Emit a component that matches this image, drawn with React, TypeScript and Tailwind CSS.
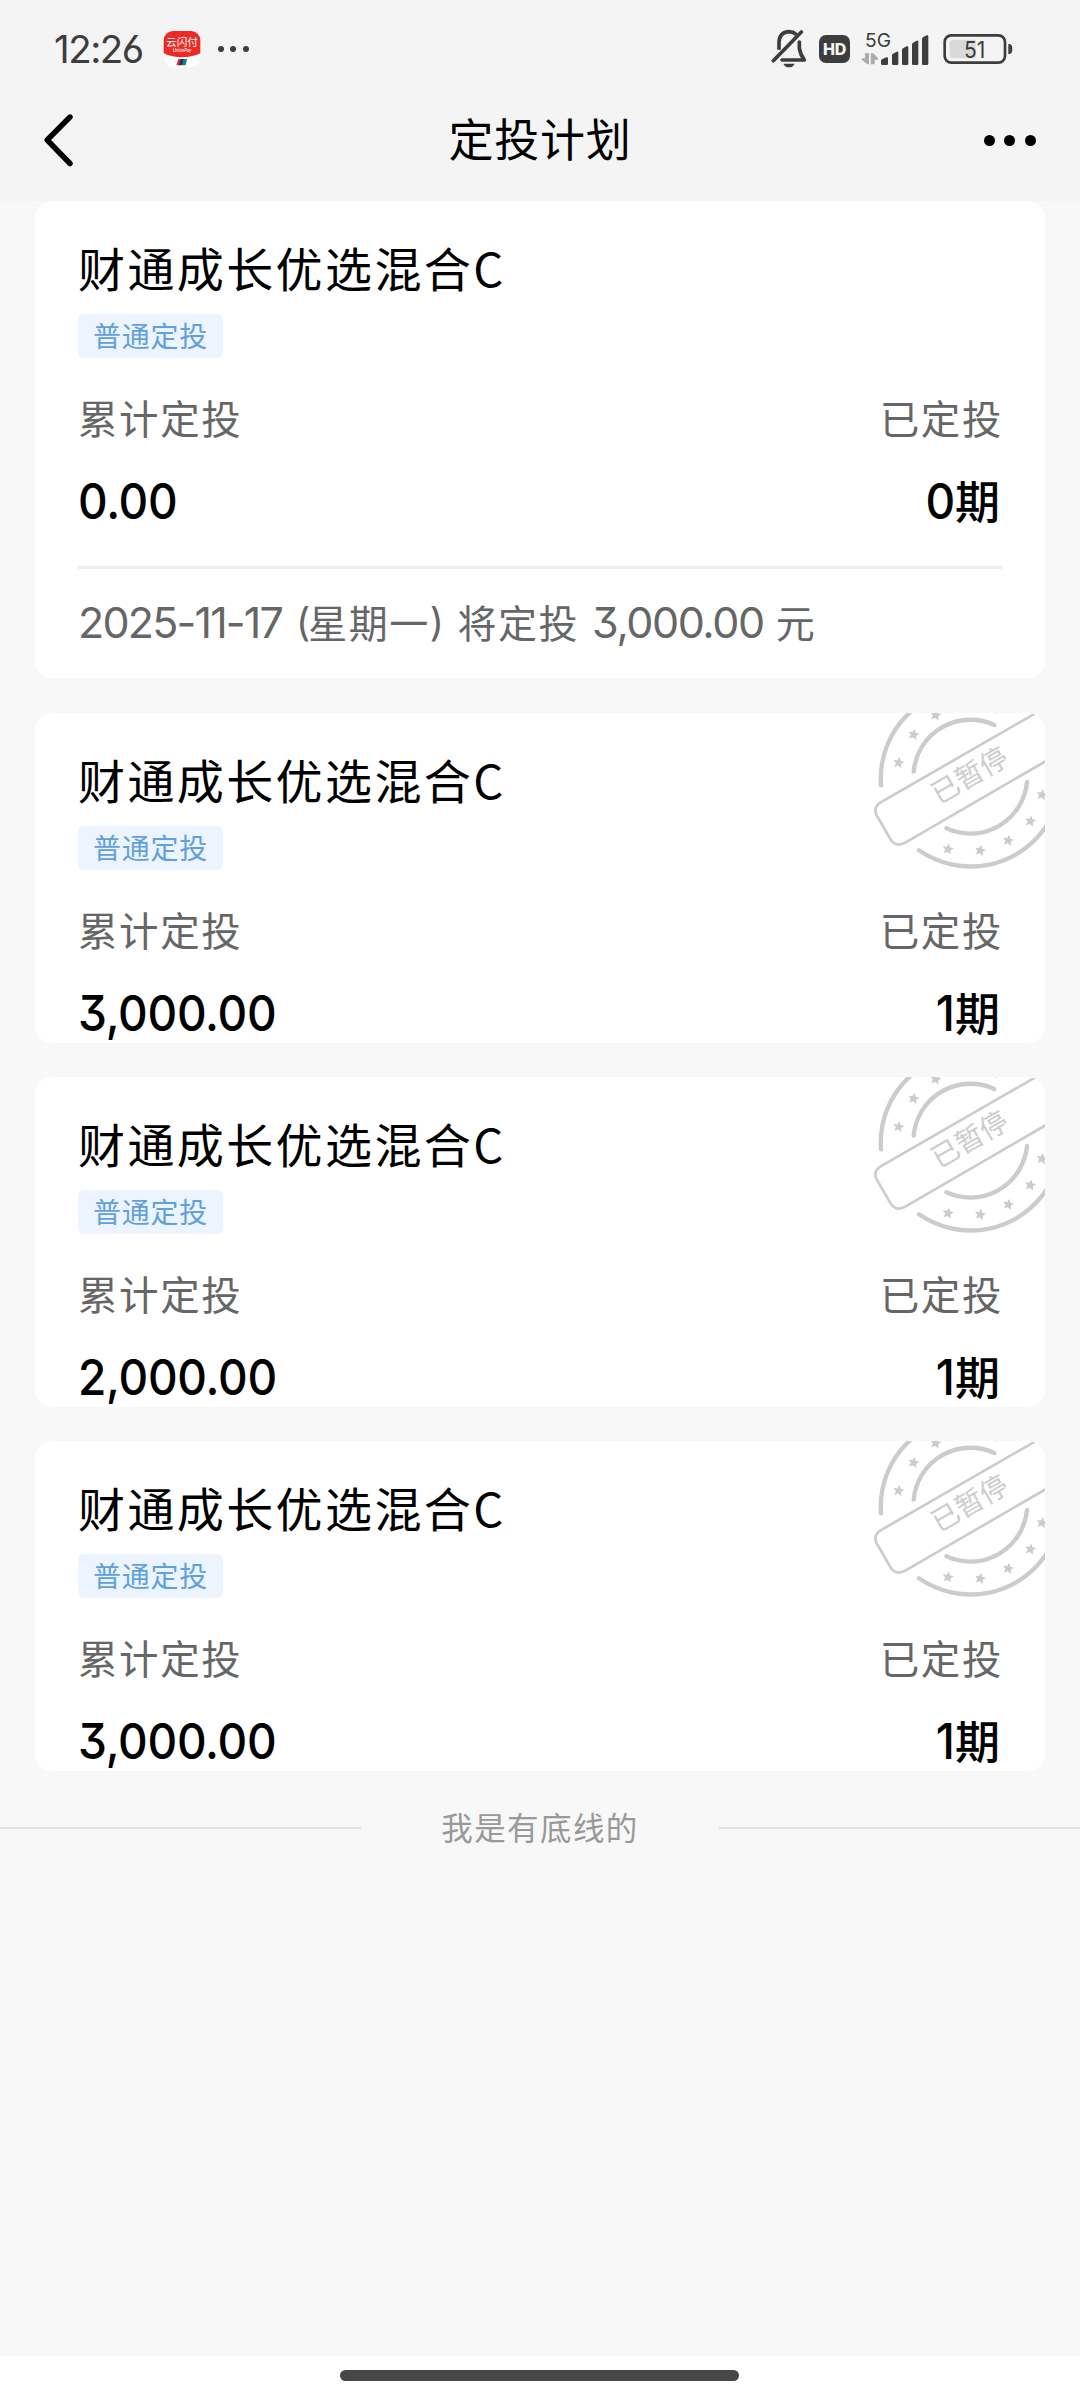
import type { ReactNode } from 'react';

const CJK = "font-['Noto_Sans_CJK_SC',sans-serif]";

/** Latin digits use Inter with the flat-topped three and straight-stemmed six. */
function Num({ children, className = '' }: { children: ReactNode; className?: string }) {
  return (
    <span className={`font-['Inter',sans-serif] [font-feature-settings:'cv09','cv03'] ${className}`}>
      {children}
    </span>
  );
}

function UnionPayIcon() {
  return (
    <svg className="ml-[20px] h-9 w-9.5" viewBox="0 0 114 108">
      <defs>
        <clipPath id="app-shape">
          <rect x="2" y="0" width="110" height="108" rx="28" />
        </clipPath>
      </defs>
      <g clipPath="url(#app-shape)">
        <rect width="114" height="108" fill="#fff" />
        <path d="M0 0H114V66Q57 92 0 66Z" fill="#ee2a24" />
        <path d="M46 84H56L50 103H40Z" fill="#d9283b" />
        <path d="M54 84H64L58 103H48Z" fill="#16306b" />
        <path d="M62 84H72L68 103H57Z" fill="#0d7f80" />
        <text x="57" y="45" fontSize="32" textAnchor="middle" fill="#fff" fontFamily="Noto Sans CJK SC, sans-serif">
          云闪付
        </text>
        <text x="57" y="64" fontSize="14" fontStyle="italic" textAnchor="middle" fill="#fff" fontFamily="Lato, sans-serif">
          UnionPay
        </text>
      </g>
    </svg>
  );
}

function BellOff() {
  return (
    <svg className="h-10 w-9" viewBox="94 90 108 120" fill="none" stroke="#3d3d3d" strokeLinecap="round" strokeLinejoin="round">
      <path d="M171 107Q160 98 148 98Q119 99 118 131V152" strokeWidth="11" strokeLinecap="butt" />
      <path d="M179 129V147Q181 165 194 183H127" strokeWidth="11" />
      <path d="M185 99L101 185" strokeWidth="11" />
      <path d="M131 194H165Q160 205 148 205Q136 205 131 194Z" fill="#3d3d3d" stroke="none" />
    </svg>
  );
}

function HdBadge() {
  return (
    <div className="ml-3 flex h-7 w-[31px] items-center justify-center rounded-[7px] bg-[#3d3d3d] font-['Inter',sans-serif] text-[16px] leading-none font-extrabold tracking-[-0.3px] text-[#f4f4f4]">
      HD
    </div>
  );
}

function Signal() {
  return (
    <svg className="ml-[11px] h-9 w-[68px] overflow-visible" viewBox="364 92 204 108">
      <text x="376" y="139" fontSize="57" fill="#3d3d3d" textLength="78" lengthAdjust="spacingAndGlyphs" fontFamily="Inter, sans-serif">
        5G
      </text>
      <g fill="#ababab">
        <path d="M376 159H390V192H383L366 178V174H376Z" />
        <path d="M393 159H401L415 174V178H405V192H393Z" />
      </g>
      <path d="M390 159V192" stroke="#f4f4f4" strokeWidth="4" />
      <g fill="#3d3d3d">
        <path d="M424 182Q424 179 427 177L440 171Q445 169 445 174V190Q445 194 441 194H428Q424 194 424 190Z" />
        <path d="M457 165Q457 162 460 160L471 154Q476 152 476 157V190Q476 194 472 194H461Q457 194 457 190Z" />
        <path d="M487 149Q487 146 490 144L501 138Q506 136 506 141V190Q506 194 502 194H491Q487 194 487 190Z" />
        <path d="M517 132Q517 129 520 127L531 121Q536 119 536 124V190Q536 194 532 194H521Q517 194 517 190Z" />
        <path d="M547 116Q547 113 550 111L561 105Q566 103 566 108V190Q566 194 562 194H551Q547 194 547 190Z" />
      </g>
    </svg>
  );
}

function Battery() {
  return (
    <svg className="ml-[14px] h-[30px] w-[70px]" viewBox="608 102 210 90">
      <rect x="613" y="106" width="181" height="82" rx="20" fill="none" stroke="#3d3d3d" strokeWidth="8" />
      <path d="M640 119H706V175H640Q628 175 628 163V131Q628 119 640 119Z" fill="#d9d9d9" />
      <path d="M804 132H808Q816 134 816 147Q816 160 808 162H804Z" fill="#3d3d3d" />
      <text x="671" y="173" fontSize="69" fill="#3d3d3d" textLength="64" lengthAdjust="spacingAndGlyphs" fontFamily="Inter, sans-serif">
        51
      </text>
    </svg>
  );
}

function StatusBar() {
  return (
    <div className="flex h-[98px] items-center justify-between pr-[67px] pl-[54px]">
      <div className="flex items-center">
        <Num className="text-[38.5px] leading-none tracking-[-1.5px] text-[#3d3d3d]">12:26</Num>
        <UnionPayIcon />
        <div className="ml-[17px] flex gap-[6.5px]">
          <i className="h-1.5 w-1.5 rounded-full bg-[#3d3d3d]" />
          <i className="h-1.5 w-1.5 rounded-full bg-[#3d3d3d]" />
          <i className="h-1.5 w-1.5 rounded-full bg-[#3d3d3d]" />
        </div>
      </div>
      <div className="flex items-center">
        <BellOff />
        <HdBadge />
        <Signal />
        <Battery />
      </div>
    </div>
  );
}

function NavBar() {
  return (
    <div className="flex h-[103px] items-start justify-between pr-[44px] pl-[44px]">
      <svg className="mt-[14px] h-[56px] w-[32px]" viewBox="0 0 32 56" fill="none" stroke="#000" strokeWidth="5.4" strokeLinecap="round" strokeLinejoin="round">
        <path d="M26 5L3.200 28L26 51.500" />
      </svg>
      <h1 className="mt-1.5 ml-5 text-[45px] leading-[68px] tracking-[0.8px] text-black">定投计划</h1>
      <div className="mt-[37px] flex gap-[9.5px]">
        <i className="h-[11px] w-[11px] rounded-full bg-black" />
        <i className="h-[11px] w-[11px] rounded-full bg-black" />
        <i className="h-[11px] w-[11px] rounded-full bg-black" />
      </div>
    </div>
  );
}

const STARS = [
  [176, 218],
  [221, 133],
  [287, 75],
  [463, 56],
  [324, 477],
  [421, 481],
  [505, 451],
  [571, 393],
  [606, 314],
];

function PausedStamp() {
  return (
    <svg className="absolute top-0 right-0 h-[177px] w-[205px]" viewBox="0 69 615 531" fill="none" stroke="#cccccc" strokeLinecap="round">
      <path d="M123 286A271 271 0 0 1 212 65" strokeWidth="13" />
      <path d="M237 481A272 272 0 0 0 625 398" strokeWidth="13" />
      <path d="M221 245A171 171 0 0 1 463 105" strokeWidth="13" />
      <path d="M319 415A171 171 0 0 0 561 276" strokeWidth="13" />
      <path d="M600 62L122 337Q98 352 110 376L150 445Q165 472 192 460L625 209" strokeWidth="8" />
      {STARS.map(([x, y]) => (
        <path
          key={`${x}-${y}`}
          transform={`translate(${x} ${y}) rotate(10)`}
          d="M0-17L5-6L17-5L8 3L11 15L0 9L-11 15L-8 3L-17-5L-5-6Z"
          fill="#cccccc"
          stroke="none"
        />
      ))}
      <text
        transform="translate(388 255) rotate(-30)"
        y="31"
        textAnchor="middle"
        fontSize="83"
        fontWeight="400"
        fill="#cccccc"
        stroke="none"
        fontFamily="Noto Sans CJK SC, sans-serif"
      >
        已暂停
      </text>
    </svg>
  );
}

interface Plan {
  amount: string;
  periods: number;
  paused: boolean;
  next?: { date: string; weekday: string; amount: string };
}

const PLANS: Plan[] = [
  {
    amount: '0.00',
    periods: 0,
    paused: false,
    next: { date: '2025-11-17', weekday: '星期一', amount: '3,000.00' },
  },
  { amount: '3,000.00', periods: 1, paused: true },
  { amount: '2,000.00', periods: 1, paused: true },
  { amount: '3,000.00', periods: 1, paused: true },
];

function PlanCard({ plan }: { plan: Plan }) {
  return (
    <section className={`relative overflow-hidden rounded-[17px] bg-white px-[43px] pt-[31px] ${plan.next ? 'mb-px h-[477px]' : 'h-[330px]'}`}>
      {plan.paused && <PausedStamp />}
      <h2 className="text-[47px] leading-[70px] tracking-[2.4px] text-black">财通成长优选混合C</h2>
      <div className="mt-[12px] flex h-11 w-[145px] items-center justify-center rounded-md bg-[#ecf5ff] pb-[3px] text-[28px] leading-none tracking-[0.8px] text-[#62a0dc]">
        普通定投
      </div>
      <div className="mt-[29px] flex justify-between text-[39.5px] leading-[60px] tracking-[1.6px] text-[#666]">
        <span>累计定投</span>
        <span className="-mr-[1px]">已定投</span>
      </div>
      <div className="mt-[24px] flex justify-between leading-[60px] text-black">
        <Num className="inline-block origin-left scale-x-[0.92] text-[50px] font-medium tracking-[-0.3px]">{plan.amount}</Num>
        <span className="relative -top-px mr-[2px] text-[45px] font-medium">
          <Num className="inline-block origin-right scale-x-[0.92] text-[50px]">{plan.periods}</Num>期
        </span>
      </div>
      {plan.next && (
        <div className="mt-[34px] flex h-[112px] items-center border-t-[3px] border-[#eee] pb-[3px] text-[39px] tracking-[1.5px] whitespace-pre text-[#666]">
          <Num className="text-[43px] tracking-[-1.8px]">{plan.next.date}</Num>
          <Num className="ml-3.5 text-[39px] tracking-[-2px]">(</Num>
          <span className="pb-0.5">{plan.next.weekday}</span>
          <Num className="text-[39px]">)</Num>
          <span className="ml-3 pb-0.5">将定投</span>
          <Num className="ml-[13px] text-[43px] tracking-[-1.4px]">{plan.next.amount}</Num>
          <span className="ml-3 pb-0.5">元</span>
        </div>
      )}
    </section>
  );
}

export default function App() {
  return (
    <div className={`flex h-[2400px] w-[1080px] flex-col overflow-hidden bg-[#f8f8f8] ${CJK}`}>
      <header className="shrink-0 bg-[#f4f4f4]">
        <StatusBar />
        <NavBar />
      </header>
      <main className="flex flex-1 flex-col gap-[34px]">
        <div className="flex flex-col gap-[34px] px-[35px]">
          {PLANS.map((plan, i) => (
            <PlanCard key={i} plan={plan} />
          ))}
        </div>
        <div className="flex h-[46px] items-center">
          <hr className="h-0.5 w-[361px] border-0 bg-[#e2e2e2]" />
          <p className="flex-1 pb-[3px] text-center text-[31.500px] leading-none tracking-[1.4px] text-[#999]">我是有底线的</p>
          <hr className="h-0.5 w-[361px] border-0 bg-[#e2e2e2]" />
        </div>
      </main>
      <footer className="flex h-11 shrink-0 justify-center bg-white pt-3.5 pr-px">
        <div className="h-[11px] w-[399px] rounded-full bg-[#474747]" />
      </footer>
    </div>
  );
}
